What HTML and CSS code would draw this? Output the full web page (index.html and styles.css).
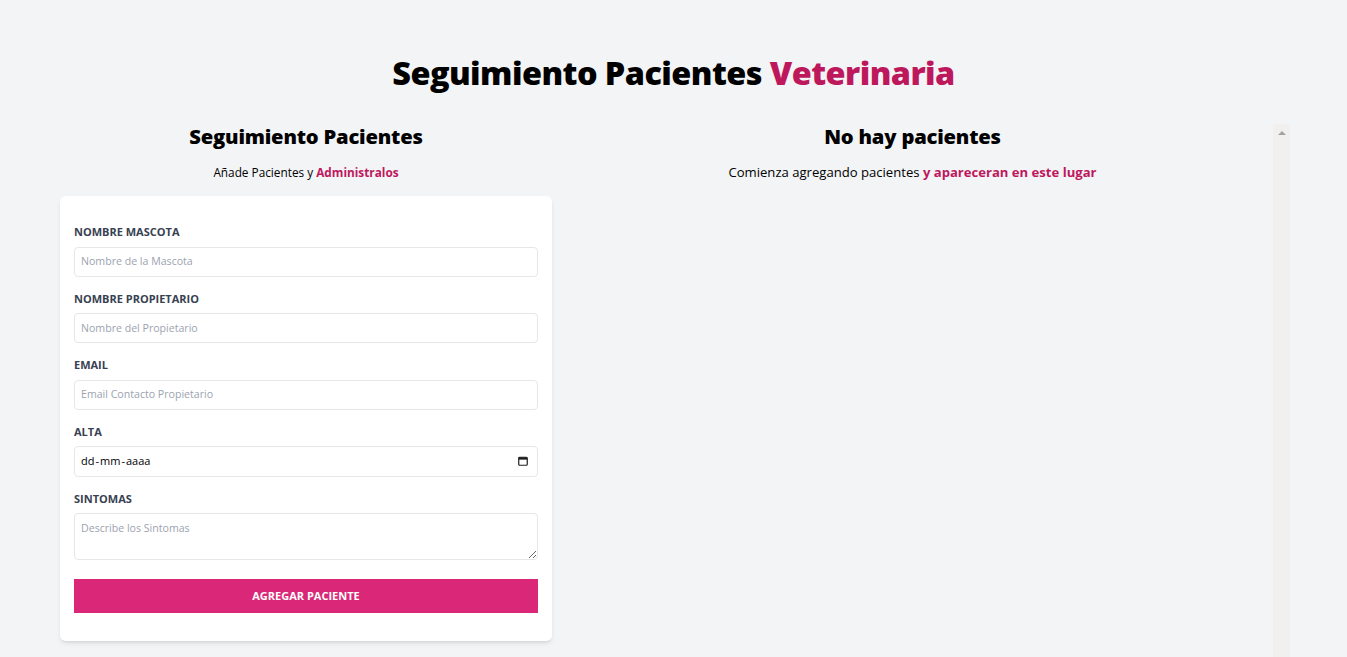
FILE: index.html
```html
<!DOCTYPE html>
<html lang="es">
<head>
<meta charset="utf-8">
<title>Seguimiento Pacientes Veterinaria</title>
<link rel="stylesheet" href="styles.css">
</head>
<body>
<div class="page">
  <h1 class="title">Seguimiento Pacientes <span class="accent">Veterinaria</span></h1>
  <div class="columns">
    <div class="col-form">
      <h2 class="col-title">Seguimiento Pacientes</h2>
      <p class="col-sub col-sub-small">Añade Pacientes y <span class="accent strong">Administralos</span></p>
      <form class="card">
        <div class="field">
          <label class="label" for="mascota">Nombre Mascota</label>
          <input class="input" id="mascota" type="text" placeholder="Nombre de la Mascota">
        </div>
        <div class="field">
          <label class="label" for="propietario">Nombre Propietario</label>
          <input class="input" id="propietario" type="text" placeholder="Nombre del Propietario">
        </div>
        <div class="field">
          <label class="label" for="email">Email</label>
          <input class="input" id="email" type="email" placeholder="Email Contacto Propietario">
        </div>
        <div class="field">
          <label class="label">Alta</label>
          <div class="input date-field">
            <span class="date-text">dd<span class="sep">-</span>mm<span class="sep">-</span>aaaa</span>
            <svg class="cal" width="10" height="10" viewBox="0 0 10 10" aria-hidden="true">
              <rect x="0.75" y="1.25" width="8.5" height="8" rx="1" fill="none" stroke="#1f1f1f" stroke-width="1.2"/>
              <rect x="0.75" y="1.25" width="8.5" height="2.4" fill="#1f1f1f"/>
            </svg>
          </div>
        </div>
        <div class="field">
          <label class="label" for="sintomas">Sintomas</label>
          <textarea class="input textarea" id="sintomas" rows="2" placeholder="Describe los Sintomas"></textarea>
        </div>
        <button class="submit" type="button">Agregar Paciente</button>
      </form>
    </div>
    <div class="col-list">
      <div class="list-content">
        <h2 class="col-title">No hay pacientes</h2>
        <p class="col-sub">Comienza agregando pacientes <span class="accent strong">y apareceran en este lugar</span></p>
      </div>
      <div class="scroll-track" aria-hidden="true"><span class="scroll-up"></span></div>
    </div>
  </div>
</div>
</body>
</html>
```

FILE: styles.css
```css
html, body {
  margin: 0;
  padding: 0;
  overflow: hidden;
}
body {
  background: #f3f4f6;
  font-family: "Open Sans", "Noto Sans", sans-serif;
  color: #000;
}
.page {
  padding-top: 56px;
}
.title {
  margin: 0;
  font-size: 32.4px;
  line-height: 33.6px;
  font-weight: 800;
  letter-spacing: -0.55px;
  text-align: center;
}
.accent {
  color: #be185d;
}
.strong {
  font-weight: 700;
}
.columns {
  display: flex;
  margin: 34px 0 0 60px;
  width: 1230px;
}
.col-form {
  width: 492px;
  flex: none;
}
.col-list {
  width: 738px;
  flex: none;
  height: 100vh;
  display: flex;
}
.list-content {
  flex: 1;
  min-width: 0;
}
.scroll-track {
  width: 17px;
  flex: none;
  background: #f1f0ef;
  display: flex;
  justify-content: center;
  padding-top: 7px;
  box-sizing: border-box;
}
.scroll-up {
  width: 0;
  height: 0;
  border-left: 4px solid transparent;
  border-right: 4px solid transparent;
  border-bottom: 4px solid #a3a3a3;
}
.col-title {
  margin: 0;
  font-size: 20.2px;
  line-height: 25.2px;
  font-weight: 800;
  letter-spacing: -0.2px;
  text-align: center;
}
.col-sub {
  margin: 14px 0 14px;
  font-size: 13.1px;
  line-height: 19.6px;
  text-align: center;
}
.col-sub-small {
  font-size: 11.8px;
}
.card {
  background: #fff;
  border-radius: 5.6px;
  box-shadow: 0 3px 5px -1px rgba(0,0,0,0.1), 0 2px 3px -2px rgba(0,0,0,0.1);
  padding: 28px 14px;
}
.field {
  margin-bottom: 14px;
}
.label {
  display: block;
  font-size: 11px;
  line-height: 16.8px;
  font-weight: 700;
  text-transform: uppercase;
  color: #374151;
}
.input {
  display: block;
  box-sizing: border-box;
  width: 100%;
  margin-top: 5.6px;
  padding: 5.6px 6px;
  border: 1px solid #e5e7eb;
  border-radius: 4px;
  font-family: inherit;
  font-size: 10.6px;
  line-height: 16.8px;
  color: #111;
  background: #fff;
  outline: none;
}
.input::placeholder {
  color: #9ca3af;
}
.date-field {
  display: flex;
  align-items: center;
  justify-content: space-between;
  height: 31px;
  padding: 0 9px 0 6px;
}
.date-text {
  font-size: 11px;
  color: #000;
}
.sep {
  margin: 0 1px;
}
.cal {
  display: block;
}
.textarea {
  height: 47px;
  resize: vertical;
}
.submit {
  display: block;
  width: 100%;
  margin-top: 19px;
  padding: 8.4px;
  border: 0;
  background: #db2777;
  color: #fff;
  font-family: inherit;
  font-size: 11px;
  line-height: 16.8px;
  font-weight: 700;
  text-transform: uppercase;
}
```
